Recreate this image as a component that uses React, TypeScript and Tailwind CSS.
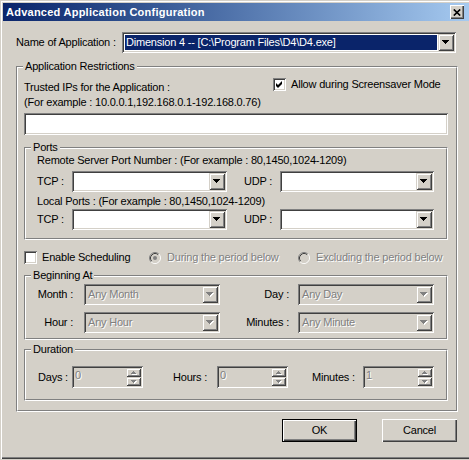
import React from "react";

const SUNKEN =
  "p-[2px] shadow-[inset_1px_1px_0_#808080,inset_-1px_-1px_0_#ffffff,inset_2px_2px_0_#404040,inset_-2px_-2px_0_#d4d0c8]";
const RAISED =
  "shadow-[inset_1px_1px_0_#d4d0c8,inset_-1px_-1px_0_#404040,inset_2px_2px_0_#ffffff,inset_-2px_-2px_0_#808080]";
const BTN =
  "shadow-[inset_1px_1px_0_#ffffff,inset_-1px_-1px_0_#404040,inset_-2px_-2px_0_#808080]";
const DIS = "text-[#808080] [text-shadow:1px_1px_0_#ffffff]";

function DownArrow({ dis }: { dis?: boolean }) {
  const d = "M0 0h7v1h-1v1h-1v1h-1v1h-1v-1h-1v-1h-1v-1h-1z";
  return (
    <svg width="8" height="5" viewBox="0 0 8 5">
      {dis && <path d={d} transform="translate(1 1)" fill="#ffffff" />}
      <path d={d} fill={dis ? "#808080" : "#000000"} />
    </svg>
  );
}

function SmallUp() {
  const d = "M2 0h1v1h1v1h1v1h-5v-1h1v-1h1z";
  return (
    <svg width="6" height="4" viewBox="0 0 6 4">
      <path d={d} transform="translate(1 1)" fill="#ffffff" />
      <path d={d} fill="#808080" />
    </svg>
  );
}

function SmallDown() {
  const d = "M0 0h5v1h-1v1h-1v1h-1v-1h-1v-1h-1z";
  return (
    <svg width="6" height="4" viewBox="0 0 6 4">
      <path d={d} transform="translate(1 1)" fill="#ffffff" />
      <path d={d} fill="#808080" />
    </svg>
  );
}

function Combo({
  className,
  text,
  disabled,
  selected,
}: {
  className: string;
  text?: string;
  disabled?: boolean;
  selected?: boolean;
}) {
  return (
    <div
      className={`${SUNKEN} h-[21px] flex shrink-0 ${
        disabled ? "bg-[#d4d0c8]" : "bg-white"
      } ${className}`}
    >
      <div className="flex-1 min-w-0 flex items-stretch p-[1px]">
        {selected ? (
          <div className="flex-1 bg-[#0a246a] text-white pl-[1px] flex items-center whitespace-nowrap overflow-hidden">
            {text}
          </div>
        ) : (
          <div
            className={`flex-1 pl-[1px] flex items-center whitespace-nowrap overflow-hidden ${
              disabled ? DIS : ""
            }`}
          >
            {text}
          </div>
        )}
      </div>
      <div
        className={`w-[16px] h-full bg-[#d4d0c8] ${RAISED} flex items-center justify-center`}
      >
        <DownArrow dis={disabled} />
      </div>
    </div>
  );
}

function Spin({ className, value }: { className: string; value: string }) {
  return (
    <div className={`${SUNKEN} h-[22px] flex shrink-0 bg-[#d4d0c8] ${className}`}>
      <div className={`flex-1 pl-[1px] pt-[1px] ${DIS}`}>{value}</div>
      <div className="w-[15px] flex flex-col">
        <div className={`flex-1 ${RAISED} flex items-center justify-center`}>
          <SmallUp />
        </div>
        <div className={`flex-1 ${RAISED} flex items-center justify-center`}>
          <SmallDown />
        </div>
      </div>
    </div>
  );
}

function CheckBox({ checked }: { checked?: boolean }) {
  return (
    <div className={`w-[13px] h-[13px] shrink-0 bg-white ${SUNKEN}`}>
      {checked && (
        <svg width="9" height="9" viewBox="0 0 9 9" className="block">
          <path d="M1 3L3 5L7 1L7 4L3 8L1 6Z" fill="#000000" />
        </svg>
      )}
    </div>
  );
}

function Radio({ checked }: { checked?: boolean }) {
  return (
    <svg width="12" height="12" viewBox="0 0 12 12" className="shrink-0">
      <circle cx="6" cy="6" r="5" fill="#d4d0c8" />
      <path d="M2.11 9.89A5.5 5.5 0 0 1 9.89 2.11" fill="none" stroke="#808080" />
      <path d="M9.89 2.11A5.5 5.5 0 0 1 2.11 9.89" fill="none" stroke="#ffffff" />
      <path d="M2.82 9.18A4.5 4.5 0 0 1 9.18 2.82" fill="none" stroke="#404040" />
      <path d="M9.18 2.82A4.5 4.5 0 0 1 2.82 9.18" fill="none" stroke="#d4d0c8" />
      {checked && <circle cx="6" cy="6" r="2" fill="#808080" />}
    </svg>
  );
}

function Group({
  title,
  className,
  inner,
  children,
}: {
  title: string;
  className: string;
  inner: string;
  children: React.ReactNode;
}) {
  return (
    <div
      className={`relative border border-t-[#808080] border-l-[#808080] border-r-white border-b-white ${className}`}
    >
      <div
        className={`border border-t-white border-l-white border-r-[#808080] border-b-[#808080] ${inner}`}
      >
        {children}
      </div>
      <span className="absolute left-[6px] top-[-7px] px-[2px] bg-[#d4d0c8] leading-[13px] whitespace-nowrap">
        {title}
      </span>
    </div>
  );
}

export default function App() {
  return (
    <div className="w-[469px] h-[460px] bg-[#d4d0c8] overflow-hidden font-['Liberation_Sans',Arial,sans-serif] text-[11px] leading-[13px] tracking-[-0.2px] text-black">
      <div className="h-[459px] flex flex-col pt-[3px] pl-[3px] shadow-[inset_1px_1px_0_#d4d0c8,inset_2px_2px_0_#ffffff,inset_0_-1px_0_#404040,inset_0_-2px_0_#808080]">
        <div className="h-[18px] shrink-0 flex items-center justify-between pl-[3px] pr-[5px] bg-linear-to-r from-[#0a246a] to-[#a6caf0]">
          <span className="text-white font-bold tracking-[0.25px] whitespace-nowrap">
            Advanced Application Configuration
          </span>
          <div
            className={`w-[14px] h-[14px] bg-[#d4d0c8] ${BTN} flex items-center justify-center`}
          >
            <svg width="8" height="7" viewBox="0 0 8 7">
              <path
                d="M0.8 0.5L7.2 6.5M7.2 0.5L0.8 6.5"
                stroke="#000000"
                strokeWidth="1.7"
              />
            </svg>
          </div>
        </div>

        <div className="flex flex-col pl-[13px]">
          <div className="mt-[11px] flex items-center h-[21px]">
            <span className="w-[106px] whitespace-nowrap">Name of Application :</span>
            <Combo
              className="w-[334px]"
              text="Dimension 4 -- [C:\Program Files\D4\D4.exe]"
              selected
            />
          </div>

          <Group
            title="Application Restrictions"
            className="mt-[13px] w-[442px]"
            inner="pl-[6px] pr-[8px] pb-[9px] flex flex-col"
          >
            <div className="mt-[10px] flex items-start">
              <div className="w-[249px] mt-[2px] leading-[15px] whitespace-nowrap">
                <div>Trusted IPs for the Application :</div>
                <div>(For example : 10.0.0.1,192.168.0.1-192.168.0.76)</div>
              </div>
              <div className="flex items-center">
                <CheckBox checked />
                <span className="ml-[5px] whitespace-nowrap">Allow during Screensaver Mode</span>
              </div>
            </div>

            <div className={`${SUNKEN} mt-[3px] h-[22px] bg-white`} />

            <Group
              title="Ports"
              className="mt-[12px]"
              inner="pt-[5px] pl-[11px] pr-[12px] pb-[8px]"
            >
              <div className="whitespace-nowrap">
                Remote Server Port Number : (For example : 80,1450,1024-1209)
              </div>
              <div className="mt-[4px] flex items-center h-[21px]">
                <span className="w-[35px]">TCP :</span>
                <Combo className="w-[155px]" />
                <span className="ml-[17px] w-[36px]">UDP :</span>
                <Combo className="w-[154px]" />
              </div>
              <div className="mt-[3px] whitespace-nowrap">
                Local Ports : (For example : 80,1450,1024-1209)
              </div>
              <div className="mt-[1px] flex items-center h-[21px]">
                <span className="w-[35px]">TCP :</span>
                <Combo className="w-[155px]" />
                <span className="ml-[17px] w-[36px]">UDP :</span>
                <Combo className="w-[154px]" />
              </div>
            </Group>

            <div className="mt-[11px] flex items-center h-[13px]">
              <div className="w-[125px] flex items-center">
                <CheckBox />
                <span className="ml-[5px] whitespace-nowrap">Enable Scheduling</span>
              </div>
              <div className="w-[149px] flex items-center">
                <Radio checked />
                <span className={`ml-[6px] whitespace-nowrap ${DIS}`}>
                  During the period below
                </span>
              </div>
              <div className="flex items-center">
                <Radio />
                <span className={`ml-[6px] whitespace-nowrap ${DIS}`}>
                  Excluding the period below
                </span>
              </div>
            </div>

            <Group title="Beginning At" className="mt-[11px]" inner="pt-[7px] pb-[5px]">
              <div className="flex items-center h-[21px]">
                <span className="w-[58px] text-right pr-[11px] whitespace-nowrap">Month :</span>
                <Combo className="w-[136px]" text="Any Month" disabled />
                <span className="w-[78px] text-right pr-[9px] whitespace-nowrap">Day :</span>
                <Combo className="w-[136px]" text="Any Day" disabled />
              </div>
              <div className="mt-[7px] flex items-center h-[21px]">
                <span className="w-[58px] text-right pr-[11px] whitespace-nowrap">Hour :</span>
                <Combo className="w-[136px]" text="Any Hour" disabled />
                <span className="w-[78px] text-right pr-[9px] whitespace-nowrap">Minutes :</span>
                <Combo className="w-[136px]" text="Any Minute" disabled />
              </div>
            </Group>

            <Group title="Duration" className="mt-[9px]" inner="pt-[15px] pb-[11px]">
              <div className="flex items-center h-[22px]">
                <span className="w-[46px] pl-[12px] whitespace-nowrap">Days :</span>
                <Spin className="w-[71px]" value="0" />
                <span className="w-[74px] pl-[30px] whitespace-nowrap">Hours :</span>
                <Spin className="w-[71px]" value="0" />
                <span className="w-[75px] pl-[24px] whitespace-nowrap">Minutes :</span>
                <Spin className="w-[71px]" value="1" />
              </div>
            </Group>
          </Group>

          <div className="mt-[7px] flex justify-end gap-[25px] pr-[12px]">
            <div className="w-[75px] h-[23px] border border-black">
              <div className={`h-full ${BTN} flex items-center justify-center`}>OK</div>
            </div>
            <div className={`w-[75px] h-[23px] ${BTN} flex items-center justify-center`}>
              Cancel
            </div>
          </div>
        </div>
      </div>
    </div>
  );
}
